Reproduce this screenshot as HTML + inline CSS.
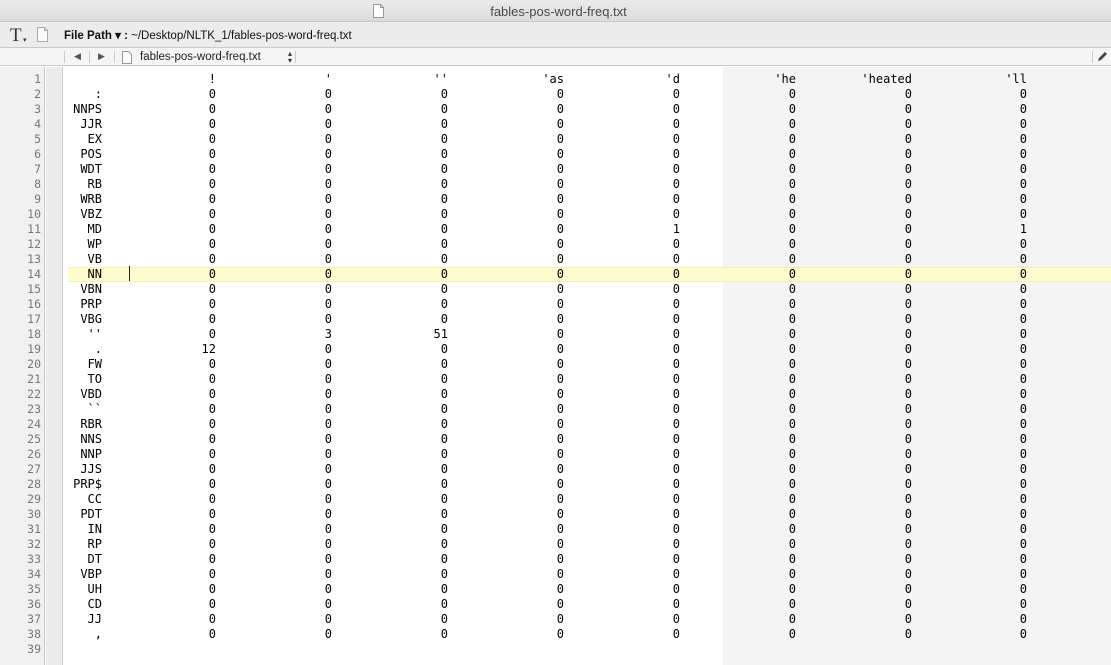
<!DOCTYPE html>
<html><head><style>
*{margin:0;padding:0;box-sizing:border-box}
body{width:1111px;height:665px;overflow:hidden;background:#fff;font-family:"Liberation Sans",sans-serif;position:relative}
#title{position:absolute;left:0;top:0;width:1111px;height:22px;background:linear-gradient(#ebebeb,#dcdcdc);border-bottom:1px solid #c8c8c8;text-align:center;font-size:13px;color:#4a4a4a;line-height:23px}
#tool{position:absolute;left:0;top:22px;width:1111px;height:26px;background:#ececec;border-bottom:1px solid #c9c9c9}
#nav{position:absolute;left:0;top:48px;width:1111px;height:18px;background:#f5f5f5;border-bottom:1px solid #c9c9c9;font-size:12px;color:#222}
#gut{position:absolute;left:0;top:67px;width:45px;height:598px;background:#f1f1f1;border-right:1px solid #c8c8c8}
#strip{position:absolute;left:46px;top:67px;width:17px;height:598px;background:#ececec;border-right:1px solid #cfcfcf}
#guide{position:absolute;left:723px;top:67px;width:388px;height:598px;background:#f4f4f4}
#hl{position:absolute;left:68px;top:267px;width:1043px;height:15px;background:#fdfccf;border-top:1px solid #f3efb5;border-bottom:1px solid #f3efb5}
#caret{position:absolute;left:129px;top:266px;width:1px;height:15px;background:#222}
.r{position:absolute;left:0;width:1111px;height:15px;line-height:15px;font-family:"DejaVu Sans Mono","Liberation Mono",monospace;font-size:12px;color:#000}
.r span{position:absolute;white-space:pre}
.n{right:1070px;color:#777;font-size:11.5px}
.l{right:1009px}
.c1{right:895px}.c2{right:779px}.c3{right:663px}.c4{right:547px}.c5{right:431px}.c6{right:315px}.c7{right:199px}.c8{right:84px}
</style></head><body>
<div id="title"><svg width="11" height="14" style="position:absolute;left:373px;top:4px" viewBox="0 0 11 14"><path d="M.5.5h7l3 3v10H.5z" fill="#fff" stroke="#999"/><path d="M7.5.5v3h3" fill="none" stroke="#999"/></svg><span style="position:relative;left:3px">fables-pos-word-freq.txt</span></div>
<div id="tool">
<span style="position:absolute;left:10px;top:3px;font-family:'Liberation Serif',serif;font-size:19px;color:#333">T</span><span style="position:absolute;left:23px;top:14px;font-size:7px;color:#333">▾</span>
<svg width="11" height="15" style="position:absolute;left:37px;top:5px" viewBox="0 0 11 15"><path d="M.5.5h7l3 3v11H.5z" fill="#fafafa" stroke="#aaa"/><path d="M7.5.5v3h3" fill="none" stroke="#aaa"/></svg>
<span style="position:absolute;left:64px;top:6px;font-size:11.5px;color:#111"><b>File Path ▾ :</b> ~/Desktop/NLTK_1/fables-pos-word-freq.txt</span>
</div>
<div id="nav">
<div style="position:absolute;left:64px;top:3px;width:1px;height:12px;background:#ccc"></div>
<span style="position:absolute;left:74px;top:3px;font-size:9px;color:#555">◀</span>
<div style="position:absolute;left:89px;top:3px;width:1px;height:12px;background:#ccc"></div>
<span style="position:absolute;left:98px;top:3px;font-size:9px;color:#555">▶</span>
<div style="position:absolute;left:114px;top:3px;width:1px;height:12px;background:#ccc"></div>
<svg width="10" height="13" style="position:absolute;left:122px;top:3px" viewBox="0 0 10 13"><path d="M.5.5h6l3 3v9H.5z" fill="#fff" stroke="#999"/></svg>
<span style="position:absolute;left:140px;top:3px;font-size:11.5px">fables-pos-word-freq.txt</span>
<span style="position:absolute;left:288px;top:2px;font-size:8px;color:#333;line-height:7px">▴<br>▾</span>
<div style="position:absolute;left:295px;top:3px;width:1px;height:12px;background:#ccc"></div>
<div style="position:absolute;left:1092px;top:3px;width:1px;height:12px;background:#ccc"></div>
<svg width="12" height="12" style="position:absolute;left:1096px;top:3px" viewBox="0 0 12 12"><path d="M2 10l3-1 6-6-2-2-6 6z" fill="#444"/></svg>
</div>
<div id="gut"></div><div id="strip"></div><div id="guide"></div><div id="hl"></div><div id="caret"></div>
<div class="r" style="top:72px"><span class="n">1</span><span class="c1">!</span><span class="c2">'</span><span class="c3">''</span><span class="c4">'as</span><span class="c5">'d</span><span class="c6">'he</span><span class="c7">'heated</span><span class="c8">'ll</span></div>
<div class="r" style="top:87px"><span class="n">2</span><span class="l">:</span><span class="c1">0</span><span class="c2">0</span><span class="c3">0</span><span class="c4">0</span><span class="c5">0</span><span class="c6">0</span><span class="c7">0</span><span class="c8">0</span></div>
<div class="r" style="top:102px"><span class="n">3</span><span class="l">NNPS</span><span class="c1">0</span><span class="c2">0</span><span class="c3">0</span><span class="c4">0</span><span class="c5">0</span><span class="c6">0</span><span class="c7">0</span><span class="c8">0</span></div>
<div class="r" style="top:117px"><span class="n">4</span><span class="l">JJR</span><span class="c1">0</span><span class="c2">0</span><span class="c3">0</span><span class="c4">0</span><span class="c5">0</span><span class="c6">0</span><span class="c7">0</span><span class="c8">0</span></div>
<div class="r" style="top:132px"><span class="n">5</span><span class="l">EX</span><span class="c1">0</span><span class="c2">0</span><span class="c3">0</span><span class="c4">0</span><span class="c5">0</span><span class="c6">0</span><span class="c7">0</span><span class="c8">0</span></div>
<div class="r" style="top:147px"><span class="n">6</span><span class="l">POS</span><span class="c1">0</span><span class="c2">0</span><span class="c3">0</span><span class="c4">0</span><span class="c5">0</span><span class="c6">0</span><span class="c7">0</span><span class="c8">0</span></div>
<div class="r" style="top:162px"><span class="n">7</span><span class="l">WDT</span><span class="c1">0</span><span class="c2">0</span><span class="c3">0</span><span class="c4">0</span><span class="c5">0</span><span class="c6">0</span><span class="c7">0</span><span class="c8">0</span></div>
<div class="r" style="top:177px"><span class="n">8</span><span class="l">RB</span><span class="c1">0</span><span class="c2">0</span><span class="c3">0</span><span class="c4">0</span><span class="c5">0</span><span class="c6">0</span><span class="c7">0</span><span class="c8">0</span></div>
<div class="r" style="top:192px"><span class="n">9</span><span class="l">WRB</span><span class="c1">0</span><span class="c2">0</span><span class="c3">0</span><span class="c4">0</span><span class="c5">0</span><span class="c6">0</span><span class="c7">0</span><span class="c8">0</span></div>
<div class="r" style="top:207px"><span class="n">10</span><span class="l">VBZ</span><span class="c1">0</span><span class="c2">0</span><span class="c3">0</span><span class="c4">0</span><span class="c5">0</span><span class="c6">0</span><span class="c7">0</span><span class="c8">0</span></div>
<div class="r" style="top:222px"><span class="n">11</span><span class="l">MD</span><span class="c1">0</span><span class="c2">0</span><span class="c3">0</span><span class="c4">0</span><span class="c5">1</span><span class="c6">0</span><span class="c7">0</span><span class="c8">1</span></div>
<div class="r" style="top:237px"><span class="n">12</span><span class="l">WP</span><span class="c1">0</span><span class="c2">0</span><span class="c3">0</span><span class="c4">0</span><span class="c5">0</span><span class="c6">0</span><span class="c7">0</span><span class="c8">0</span></div>
<div class="r" style="top:252px"><span class="n">13</span><span class="l">VB</span><span class="c1">0</span><span class="c2">0</span><span class="c3">0</span><span class="c4">0</span><span class="c5">0</span><span class="c6">0</span><span class="c7">0</span><span class="c8">0</span></div>
<div class="r" style="top:267px"><span class="n">14</span><span class="l">NN</span><span class="c1">0</span><span class="c2">0</span><span class="c3">0</span><span class="c4">0</span><span class="c5">0</span><span class="c6">0</span><span class="c7">0</span><span class="c8">0</span></div>
<div class="r" style="top:282px"><span class="n">15</span><span class="l">VBN</span><span class="c1">0</span><span class="c2">0</span><span class="c3">0</span><span class="c4">0</span><span class="c5">0</span><span class="c6">0</span><span class="c7">0</span><span class="c8">0</span></div>
<div class="r" style="top:297px"><span class="n">16</span><span class="l">PRP</span><span class="c1">0</span><span class="c2">0</span><span class="c3">0</span><span class="c4">0</span><span class="c5">0</span><span class="c6">0</span><span class="c7">0</span><span class="c8">0</span></div>
<div class="r" style="top:312px"><span class="n">17</span><span class="l">VBG</span><span class="c1">0</span><span class="c2">0</span><span class="c3">0</span><span class="c4">0</span><span class="c5">0</span><span class="c6">0</span><span class="c7">0</span><span class="c8">0</span></div>
<div class="r" style="top:327px"><span class="n">18</span><span class="l">''</span><span class="c1">0</span><span class="c2">3</span><span class="c3">51</span><span class="c4">0</span><span class="c5">0</span><span class="c6">0</span><span class="c7">0</span><span class="c8">0</span></div>
<div class="r" style="top:342px"><span class="n">19</span><span class="l">.</span><span class="c1">12</span><span class="c2">0</span><span class="c3">0</span><span class="c4">0</span><span class="c5">0</span><span class="c6">0</span><span class="c7">0</span><span class="c8">0</span></div>
<div class="r" style="top:357px"><span class="n">20</span><span class="l">FW</span><span class="c1">0</span><span class="c2">0</span><span class="c3">0</span><span class="c4">0</span><span class="c5">0</span><span class="c6">0</span><span class="c7">0</span><span class="c8">0</span></div>
<div class="r" style="top:372px"><span class="n">21</span><span class="l">TO</span><span class="c1">0</span><span class="c2">0</span><span class="c3">0</span><span class="c4">0</span><span class="c5">0</span><span class="c6">0</span><span class="c7">0</span><span class="c8">0</span></div>
<div class="r" style="top:387px"><span class="n">22</span><span class="l">VBD</span><span class="c1">0</span><span class="c2">0</span><span class="c3">0</span><span class="c4">0</span><span class="c5">0</span><span class="c6">0</span><span class="c7">0</span><span class="c8">0</span></div>
<div class="r" style="top:402px"><span class="n">23</span><span class="l">``</span><span class="c1">0</span><span class="c2">0</span><span class="c3">0</span><span class="c4">0</span><span class="c5">0</span><span class="c6">0</span><span class="c7">0</span><span class="c8">0</span></div>
<div class="r" style="top:417px"><span class="n">24</span><span class="l">RBR</span><span class="c1">0</span><span class="c2">0</span><span class="c3">0</span><span class="c4">0</span><span class="c5">0</span><span class="c6">0</span><span class="c7">0</span><span class="c8">0</span></div>
<div class="r" style="top:432px"><span class="n">25</span><span class="l">NNS</span><span class="c1">0</span><span class="c2">0</span><span class="c3">0</span><span class="c4">0</span><span class="c5">0</span><span class="c6">0</span><span class="c7">0</span><span class="c8">0</span></div>
<div class="r" style="top:447px"><span class="n">26</span><span class="l">NNP</span><span class="c1">0</span><span class="c2">0</span><span class="c3">0</span><span class="c4">0</span><span class="c5">0</span><span class="c6">0</span><span class="c7">0</span><span class="c8">0</span></div>
<div class="r" style="top:462px"><span class="n">27</span><span class="l">JJS</span><span class="c1">0</span><span class="c2">0</span><span class="c3">0</span><span class="c4">0</span><span class="c5">0</span><span class="c6">0</span><span class="c7">0</span><span class="c8">0</span></div>
<div class="r" style="top:477px"><span class="n">28</span><span class="l">PRP$</span><span class="c1">0</span><span class="c2">0</span><span class="c3">0</span><span class="c4">0</span><span class="c5">0</span><span class="c6">0</span><span class="c7">0</span><span class="c8">0</span></div>
<div class="r" style="top:492px"><span class="n">29</span><span class="l">CC</span><span class="c1">0</span><span class="c2">0</span><span class="c3">0</span><span class="c4">0</span><span class="c5">0</span><span class="c6">0</span><span class="c7">0</span><span class="c8">0</span></div>
<div class="r" style="top:507px"><span class="n">30</span><span class="l">PDT</span><span class="c1">0</span><span class="c2">0</span><span class="c3">0</span><span class="c4">0</span><span class="c5">0</span><span class="c6">0</span><span class="c7">0</span><span class="c8">0</span></div>
<div class="r" style="top:522px"><span class="n">31</span><span class="l">IN</span><span class="c1">0</span><span class="c2">0</span><span class="c3">0</span><span class="c4">0</span><span class="c5">0</span><span class="c6">0</span><span class="c7">0</span><span class="c8">0</span></div>
<div class="r" style="top:537px"><span class="n">32</span><span class="l">RP</span><span class="c1">0</span><span class="c2">0</span><span class="c3">0</span><span class="c4">0</span><span class="c5">0</span><span class="c6">0</span><span class="c7">0</span><span class="c8">0</span></div>
<div class="r" style="top:552px"><span class="n">33</span><span class="l">DT</span><span class="c1">0</span><span class="c2">0</span><span class="c3">0</span><span class="c4">0</span><span class="c5">0</span><span class="c6">0</span><span class="c7">0</span><span class="c8">0</span></div>
<div class="r" style="top:567px"><span class="n">34</span><span class="l">VBP</span><span class="c1">0</span><span class="c2">0</span><span class="c3">0</span><span class="c4">0</span><span class="c5">0</span><span class="c6">0</span><span class="c7">0</span><span class="c8">0</span></div>
<div class="r" style="top:582px"><span class="n">35</span><span class="l">UH</span><span class="c1">0</span><span class="c2">0</span><span class="c3">0</span><span class="c4">0</span><span class="c5">0</span><span class="c6">0</span><span class="c7">0</span><span class="c8">0</span></div>
<div class="r" style="top:597px"><span class="n">36</span><span class="l">CD</span><span class="c1">0</span><span class="c2">0</span><span class="c3">0</span><span class="c4">0</span><span class="c5">0</span><span class="c6">0</span><span class="c7">0</span><span class="c8">0</span></div>
<div class="r" style="top:612px"><span class="n">37</span><span class="l">JJ</span><span class="c1">0</span><span class="c2">0</span><span class="c3">0</span><span class="c4">0</span><span class="c5">0</span><span class="c6">0</span><span class="c7">0</span><span class="c8">0</span></div>
<div class="r" style="top:627px"><span class="n">38</span><span class="l">,</span><span class="c1">0</span><span class="c2">0</span><span class="c3">0</span><span class="c4">0</span><span class="c5">0</span><span class="c6">0</span><span class="c7">0</span><span class="c8">0</span></div>
<div class="r" style="top:642px"><span class="n">39</span></div>
</body></html>
